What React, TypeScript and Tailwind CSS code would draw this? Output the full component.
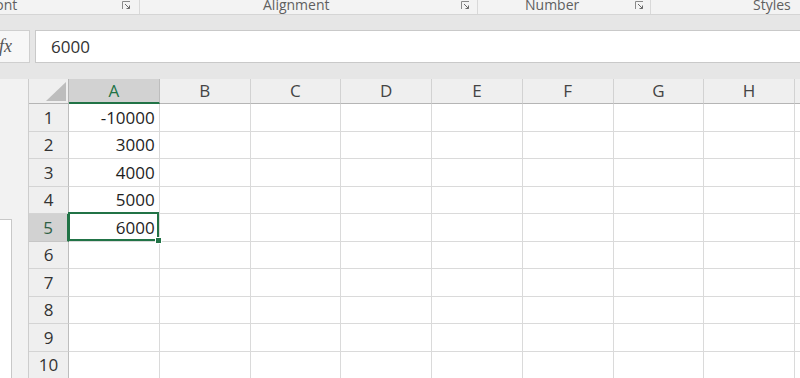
import React from "react"

const font = { fontFamily: "'Open Sans', 'Noto Sans', sans-serif" }

const columns = ["A", "B", "C", "D", "E", "F", "G", "H"]
const values: Record<number, string> = { 1: "-10000", 2: "3000", 3: "4000", 4: "5000", 5: "6000" }
const selectedRow = 5

function Launcher() {
  return (
    <svg width="9" height="9" viewBox="0 0 9 9" className="shrink-0 mt-[1px]">
      <path d="M0.5 8 V0.5 H8" fill="none" stroke="#8a8a8a" strokeWidth="1" />
      <path d="M3 3 L7.5 7.5 M7.5 4.5 V7.5 H4.5" fill="none" stroke="#6a6a6a" strokeWidth="1" />
    </svg>
  )
}

function RibbonGroups() {
  return (
    <div className="shrink-0 flex h-[15px] bg-[#f3f3f3] border-b border-[#d5d5d5] overflow-hidden text-[14px] leading-[10px] text-[#5f5f5f]">
      <div className="w-[140px] flex items-start border-r border-[#d9d9d9]">
        <span className="-ml-[12px]">Font</span>
        <div className="ml-auto mr-[8px]"><Launcher /></div>
      </div>
      <div className="w-[338px] flex items-start pl-[123px] border-r border-[#d9d9d9]">
        <span>Alignment</span>
        <div className="ml-auto mr-[7px]"><Launcher /></div>
      </div>
      <div className="w-[173px] flex items-start pl-[47px] border-r border-[#d9d9d9]">
        <span>Number</span>
        <div className="ml-auto mr-[6px]"><Launcher /></div>
      </div>
      <div className="flex-1 flex items-start pl-[102px]">
        <span>Styles</span>
      </div>
    </div>
  )
}

function FormulaBar() {
  return (
    <div className="shrink-0 bg-[#e6e6e6] pt-[15px] pb-[16px] flex gap-[5px]">
      <div className="w-[30px] h-[33px] bg-[#f7f7f7] border border-l-0 border-[#cfcfcf] flex items-center justify-end pr-[17px] overflow-hidden">
        <span className="italic text-[18px] text-[#555]" style={{ fontFamily: "'Liberation Serif', serif" }}>fx</span>
      </div>
      <div className="flex-1 h-[33px] bg-white border border-r-0 border-[#c9c9c9] flex items-center pl-[15px] text-[17px] text-[#333]">
        6000
      </div>
    </div>
  )
}

function Sheet() {
  return (
    <div className="shrink-0 flex bg-[#e6e6e6]">
      <div className="w-[29px] bg-[#f2f2f2] border-r border-[#cdcdcd] flex flex-col">
        <div className="h-[140px]" />
        <div className="w-[12px] flex-1 bg-white border-t border-r border-[#c8c8c8]" />
      </div>
      <div className="grid grid-cols-[40px_repeat(8,90.75px)_1fr] grid-rows-[25px_repeat(10,27.5px)] flex-1 bg-white text-[17px]">
        <div className="bg-[#efefef] border-r border-b border-[#b5b5b5] flex items-end justify-end pr-[2px] pb-[2px]">
          <svg width="20" height="19" viewBox="0 0 20 19">
            <path d="M20 0 V19 H0 Z" fill="#bdbdbd" />
          </svg>
        </div>
        {columns.map((c) =>
          c === "A" ? (
            <div key={c} className="bg-[#d2d2d2] border-r border-[#bdbdbd] border-b-2 border-b-[#217346] flex items-center justify-center text-[#217346]">
              {c}
            </div>
          ) : (
            <div key={c} className="bg-[#efefef] border-r border-[#d2d2d2] border-b border-b-[#b5b5b5] flex items-center justify-center text-[#444]">
              {c}
            </div>
          )
        )}
        <div className="bg-[#efefef] border-b border-b-[#b5b5b5]" />
        {Array.from({ length: 10 }, (_, i) => i + 1).map((r) => (
          <React.Fragment key={r}>
            <div
              className={
                r === selectedRow
                  ? "bg-[#d2d2d2] border-r-2 border-r-[#217346] border-b border-b-[#c6c6c6] flex items-center justify-center text-[#2f5f45]"
                  : "bg-[#efefef] border-r border-r-[#bdbdbd] border-b border-b-[#d4d4d4] flex items-center justify-center text-[#333]"
              }
            >
              {r}
            </div>
            {columns.map((c) => (
              <div key={c} className="relative border-r border-b border-[#dadada] flex items-center justify-end pr-[4px] text-[#1e1e1e]">
                {c === "A" ? values[r] ?? "" : ""}
                {c === "A" && r === selectedRow && (
                  <div className="absolute -left-[1px] -top-[2px] right-0 bottom-0 border-2 border-[#217346] z-10">
                    <div className="absolute -right-[5px] -bottom-[5px] w-[7px] h-[7px] bg-[#217346] border border-white" />
                  </div>
                )}
              </div>
            ))}
            <div className="border-b border-[#dadada]" />
          </React.Fragment>
        ))}
      </div>
    </div>
  )
}

export default function App() {
  return (
    <div className="w-[800px] h-[378px] overflow-hidden flex flex-col bg-white" style={font}>
      <RibbonGroups />
      <FormulaBar />
      <Sheet />
    </div>
  )
}
